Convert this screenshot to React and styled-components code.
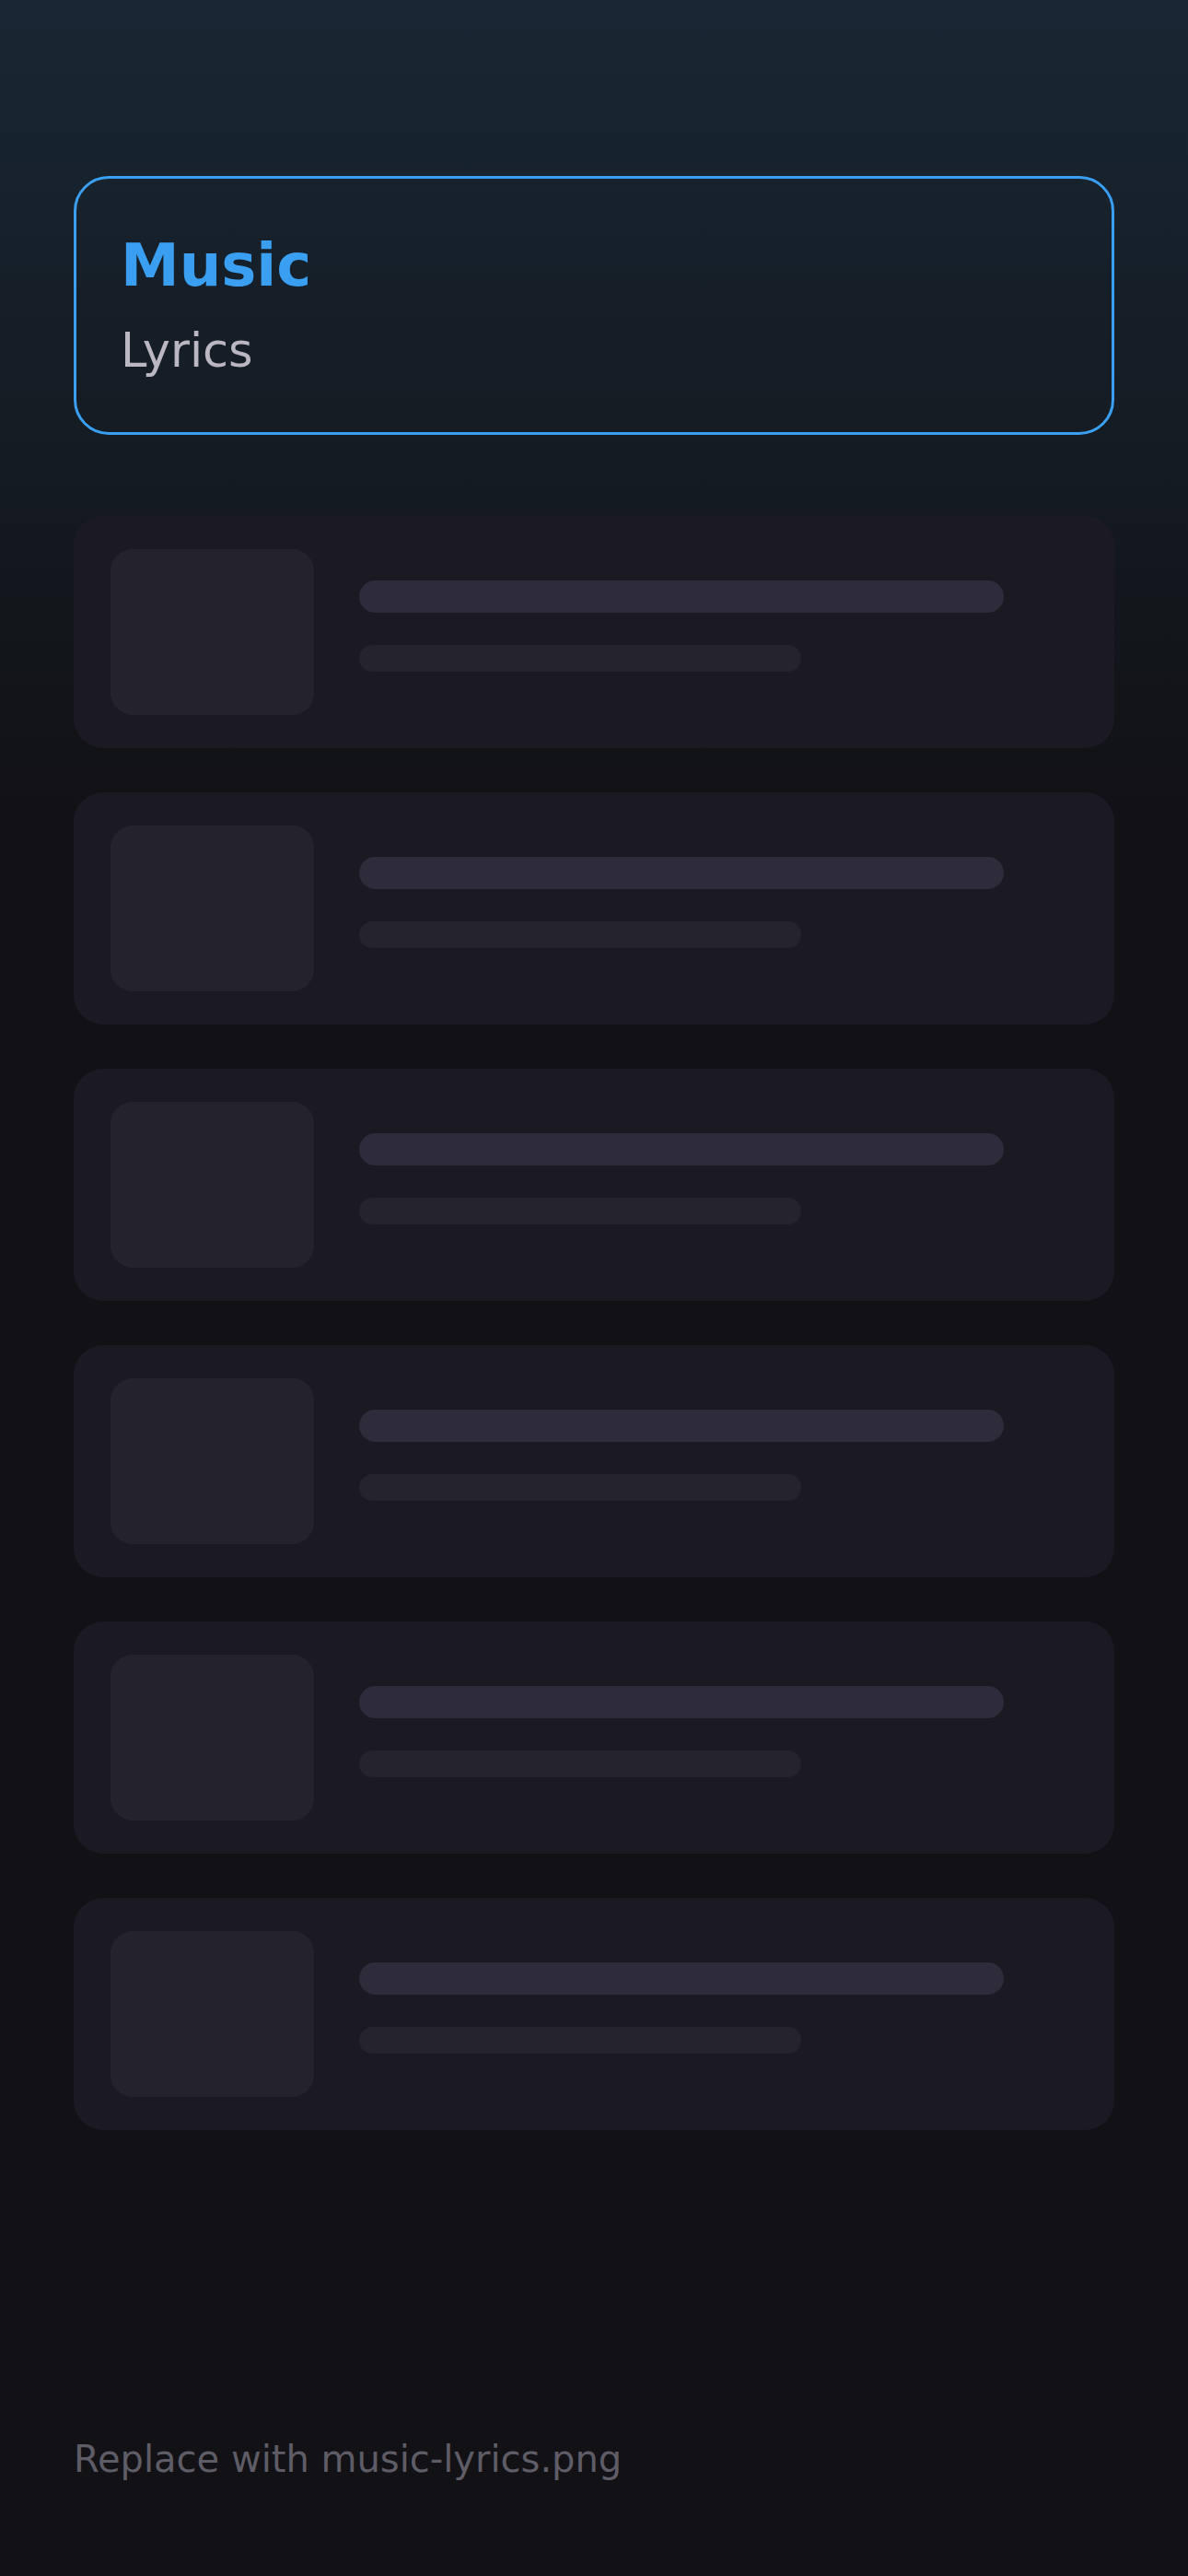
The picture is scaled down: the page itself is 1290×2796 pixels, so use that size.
import React from "react";
import styled, { createGlobalStyle } from "styled-components";

const GlobalStyle = createGlobalStyle`
  html, body {
    margin: 0;
    padding: 0;
    background: #121116;
  }
  body {
    font-family: "DejaVu Sans", "Noto Sans", sans-serif;
  }
  * { box-sizing: border-box; }
`;

const Page = styled.div`
  min-height: 2796px;
  display: flex;
  flex-direction: column;
  padding: 191px 80px 104px;
  background: linear-gradient(
    180deg,
    #182733 0px,
    #151d26 400px,
    #121417 780px,
    #121116 900px,
    #121116 100%
  );
`;

const Header = styled.header`
  display: flex;
  flex-direction: column;
  border: 3px solid #3a9ff0;
  border-radius: 38px;
  padding: 57px 48px 59px;
`;

const Title = styled.h1`
  margin: 0;
  font-size: 64px;
  font-weight: 700;
  line-height: normal;
  color: #3a9ff0;
`;

const Subtitle = styled.div`
  margin-top: 26px;
  font-size: 51px;
  line-height: normal;
  color: #bab6c2;
`;

const List = styled.div`
  display: flex;
  flex-direction: column;
  gap: 48px;
  margin-top: 88px;
`;

const Card = styled.div`
  display: flex;
  align-items: flex-start;
  gap: 49px;
  height: 252px;
  padding: 36px 40px;
  background: #1b1a23;
  border-radius: 32px;
`;

const Thumb = styled.div`
  flex: none;
  width: 221px;
  height: 180px;
  border-radius: 24px;
  background: #24222d;
`;

const Lines = styled.div`
  display: flex;
  flex-direction: column;
  gap: 35px;
  padding-top: 34px;
`;

const Bar = styled.div`
  width: ${(p) => p.$w}px;
  height: ${(p) => p.$h}px;
  border-radius: ${(p) => p.$h / 2}px;
  background: ${(p) => p.$color};
`;

const Footer = styled.div`
  margin-top: auto;
  font-size: 40px;
  line-height: normal;
  color: #5e5c67;
`;

export default function App() {
  const items = [0, 1, 2, 3, 4, 5];
  return (
    <>
      <GlobalStyle />
      <Page>
        <Header>
          <Title>Music</Title>
          <Subtitle>Lyrics</Subtitle>
        </Header>
        <List>
          {items.map((i) => (
            <Card key={i}>
              <Thumb />
              <Lines>
                <Bar $w={700} $h={35} $color="#2e2b3a" />
                <Bar $w={480} $h={29} $color="#25232e" />
              </Lines>
            </Card>
          ))}
        </List>
        <Footer>Replace with music-lyrics.png</Footer>
      </Page>
    </>
  );
}
